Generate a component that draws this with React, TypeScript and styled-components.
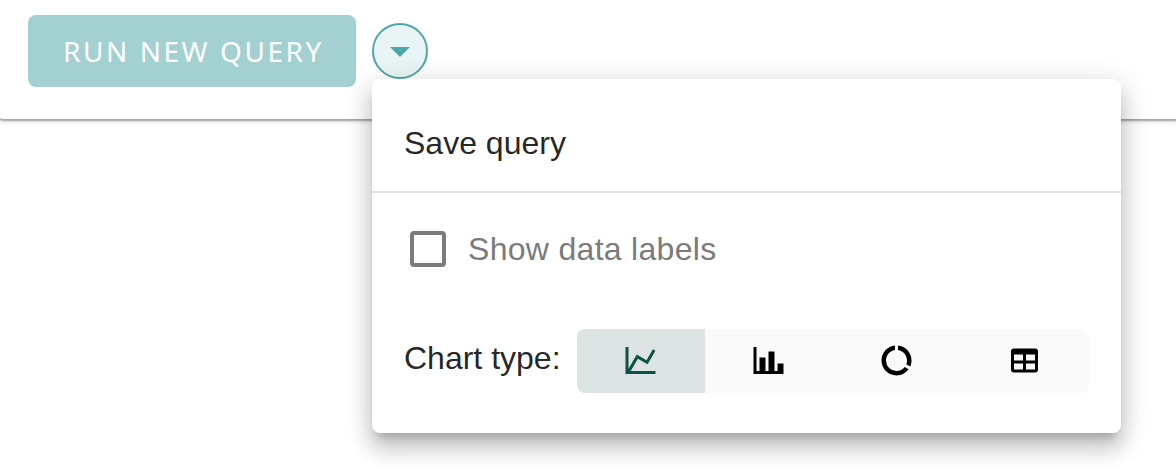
import React from "react";
import styled, { createGlobalStyle } from "styled-components";

const GlobalStyle = createGlobalStyle`
  *, *::before, *::after { box-sizing: border-box; }
  body {
    margin: 0;
    background: #fff;
    overflow: hidden;
    color: rgba(0, 0, 0, 0.87);
    font-family: "Liberation Sans", Helvetica, Arial, sans-serif;
  }
`;

const Page = styled.main`
  height: 476px;
`;

const Card = styled.section`
  position: relative;
  display: flex;
  align-items: flex-start;
  gap: 16px;
  height: 119px;
  margin: 0 -8px 0 -4px;
  padding: 15px 32px 0;
  background: #fff;
  border-radius: 0 0 8px 8px;
  box-shadow:
    0 4px 2px -2px rgba(0, 0, 0, 0.2),
    0 2px 2px 0 rgba(0, 0, 0, 0.14),
    0 2px 6px 0 rgba(0, 0, 0, 0.12);
`;

const RunButton = styled.button`
  width: 328px;
  height: 72px;
  padding: 0 0 0 3px;
  border: 0;
  border-radius: 8px;
  background: #a3d0d0;
  color: #fff;
  font: 400 28px/40px "Noto Sans", sans-serif;
  letter-spacing: 2.55px;
  white-space: nowrap;
`;

const MenuAnchor = styled.div`
  position: relative;
  padding-top: 8px;
`;

const MenuToggle = styled.button`
  display: flex;
  align-items: center;
  justify-content: center;
  width: 56px;
  height: 56px;
  padding: 2px 0 0;
  border: 2px solid #4fa8a8;
  border-radius: 50%;
  background: #e9f4f4;
`;

const Caret = styled.span`
  border: 10px solid transparent;
  border-top-color: #4fa8a8;
  border-bottom: 0;
`;

const Menu = styled.div`
  position: absolute;
  top: 64px;
  left: 0;
  width: 749px;
  height: 354px;
  background: #fff;
  border-radius: 8px;
  box-shadow:
    0 10px 10px -6px rgba(0, 0, 0, 0.2),
    0 16px 20px 2px rgba(0, 0, 0, 0.14),
    0 6px 28px 4px rgba(0, 0, 0, 0.12);
  font-size: 32px;
  line-height: 40px;
`;

const MenuItem = styled.div`
  display: flex;
  align-items: center;
  height: 114px;
  padding: 16px 32px 0;
  border-bottom: 2px solid #e0e0e0;
`;

const CheckRow = styled.label`
  display: flex;
  align-items: center;
  gap: 22px;
  height: 112px;
  padding: 0 38px;
  color: #7b7b7b;
`;

const CheckBox = styled.span`
  width: 36px;
  height: 36px;
  border: 4px solid #7b7b7b;
  border-radius: 4px;
`;

const ChartRow = styled.div`
  display: flex;
  align-items: center;
  justify-content: space-between;
  height: 112px;
  padding: 0 32px;
`;

const Label = styled.span<{ $spacing?: number }>`
  letter-spacing: ${(p) => p.$spacing ?? 0}px;
  white-space: nowrap;
`;

const ChartLabel = styled(Label)`
  padding-bottom: 7px;
`;

const ToggleGroup = styled.div`
  display: flex;
  border-radius: 8px;
  overflow: hidden;
`;

const Toggle = styled.button<{ $active?: boolean }>`
  display: flex;
  align-items: center;
  justify-content: center;
  width: 128px;
  height: 64px;
  padding: 0;
  border: 0;
  background: ${(p) => (p.$active ? "#dce4e3" : "#fafafa")};
  color: ${(p) => (p.$active ? "#0b5345" : "#000")};
`;

const Icon = styled.svg`
  width: 36px;
  height: 36px;
  fill: currentColor;
`;

const chartTypes = [
  {
    name: "Line",
    path: "M16,11.78L20.24,4.45L21.97,5.45L16.74,14.5L10.23,10.75L5.46,19H22V21H2V3H4V17.54L9.5,8L16,11.78Z",
  },
  {
    name: "Bar",
    path: "M22,21H2V3H4V19H6V10H10V19H12V6H16V19H18V14H22V21Z",
  },
  {
    name: "Donut",
    path: "M13,2.05V5.08C16.39,5.57 19,8.47 19,12C19,12.9 18.82,13.75 18.5,14.54L21.12,16.07C21.68,14.83 22,13.45 22,12C22,6.82 18.05,2.55 13,2.05M12,19A7,7 0 0,1 5,12C5,8.47 7.61,5.57 11,5.08V2.05C5.94,2.55 2,6.81 2,12A10,10 0 0,0 12,22C15.3,22 18.23,20.39 20.05,17.91L17.45,16.38C16.17,18 14.21,19 12,19Z",
  },
  {
    name: "Table",
    path: "M5,4H19A2,2 0 0,1 21,6V18A2,2 0 0,1 19,20H5A2,2 0 0,1 3,18V6A2,2 0 0,1 5,4M5,8V12H11V8H5M13,8V12H19V8H13M5,14V18H11V14H5M13,14V18H19V14H13Z",
  },
];

export default function App() {
  return (
    <Page>
      <GlobalStyle />
      <Card>
        <RunButton>RUN NEW QUERY</RunButton>
        <MenuAnchor>
          <MenuToggle aria-label="More">
            <Caret />
          </MenuToggle>
          <Menu>
            <MenuItem>
              <Label>Save query</Label>
            </MenuItem>
            <CheckRow>
              <CheckBox />
              <Label $spacing={0.3}>Show data labels</Label>
            </CheckRow>
            <ChartRow>
              <ChartLabel>Chart type:</ChartLabel>
              <ToggleGroup>
                {chartTypes.map((type, i) => (
                  <Toggle key={type.name} $active={i === 0} aria-label={type.name}>
                    <Icon viewBox="0.333 0.333 24 24">
                      <path d={type.path} />
                    </Icon>
                  </Toggle>
                ))}
              </ToggleGroup>
            </ChartRow>
          </Menu>
        </MenuAnchor>
      </Card>
    </Page>
  );
}
